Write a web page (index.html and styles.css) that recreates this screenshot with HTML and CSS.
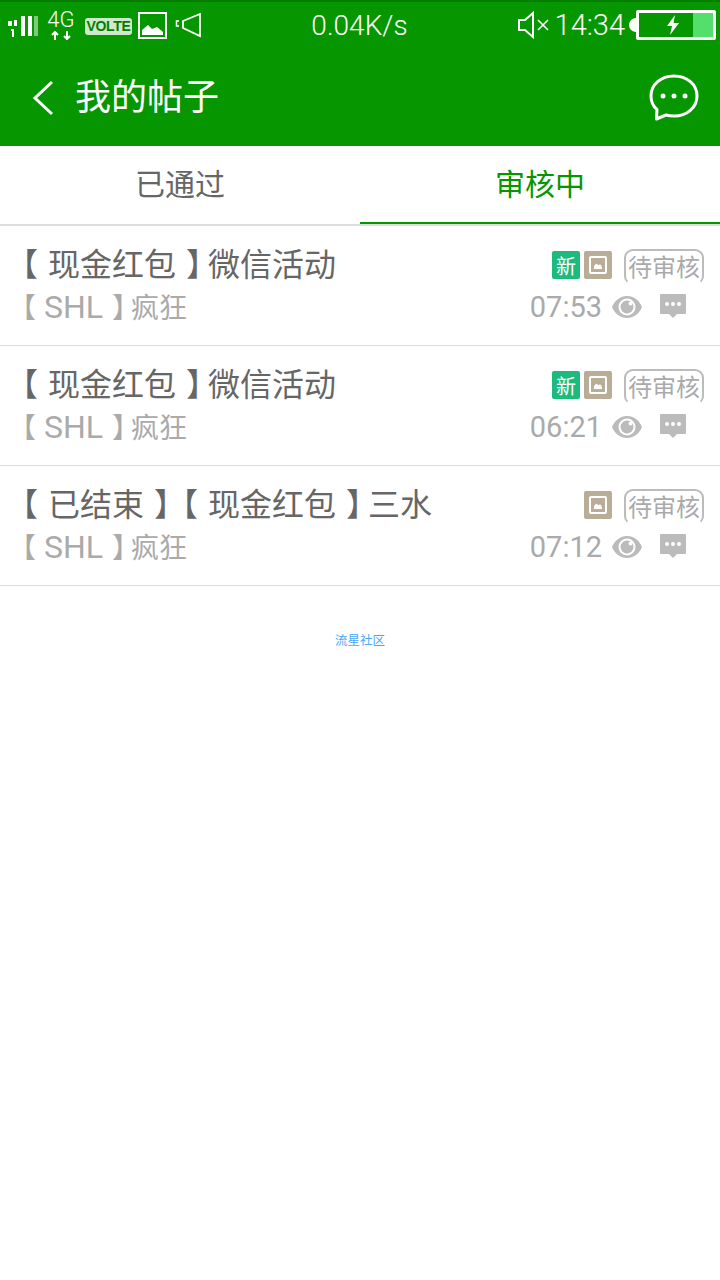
FILE: index.html
```html
<!DOCTYPE html>
<html lang="zh">
<head>
<meta charset="utf-8">
<title>我的帖子</title>
<link rel="stylesheet" href="styles.css">
</head>
<body>
<header class="top">
  <div class="status">
    <div class="status-left">
      <svg class="ic-signal" width="32" height="24" viewBox="0 0 32 24"><g fill="#fff"><rect x="0" y="7" width="4" height="5"/><rect x="6" y="6" width="3" height="6"/><rect x="13" y="2" width="4" height="20"/><rect x="20" y="2" width="4" height="20"/><path d="M3 15H6V23H4V17H3Z"/></g><rect x="26" y="2" width="4" height="20" fill="#7fc97f"/></svg>
      <div class="net"><span class="net-label">4G</span><svg width="24" height="9" viewBox="0 0 24 9"><path d="M6 9V1M3 4 6 1 9 4M18 0V8M15 5 18 8 21 5" fill="none" stroke="#fff" stroke-width="2"/></svg></div>
      <span class="volte">VOLTE</span>
      <svg class="ic-pic" width="29" height="27" viewBox="0 0 29 27"><rect x="1" y="1" width="27" height="25" fill="none" stroke="#fff" stroke-width="2"/><path d="M4 23V18L10 13 14 17 19 15 25 20V23Z" fill="#fff"/></svg>
      <svg class="ic-horn" width="27" height="25" viewBox="0 0 27 25"><path d="M8 8 25 1V23L8 15Z" fill="none" stroke="#fff" stroke-width="1.800"/><path d="M4 8H1.500V13H4" fill="none" stroke="#fff" stroke-width="1.500"/></svg>
    </div>
    <span class="speed">0.04K/s</span>
    <div class="status-right">
      <svg width="32" height="28" viewBox="0 0 32 28"><path d="M1 9H7L15 2V26L7 19H1Z" fill="none" stroke="#fff" stroke-width="2"/><path d="M20 9 30 19M30 9 20 19" stroke="#fff" stroke-width="1.600"/></svg>
      <span class="clock">14:34</span>
      <div class="battery">
        <svg class="bolt" width="14" height="20" viewBox="0 0 14 20"><path d="M9 0 1 11H6L4 20 13 8H7.500Z" fill="#fff"/></svg>
        <div class="level"></div>
      </div>
    </div>
  </div>
  <div class="titlebar">
    <svg class="back" width="22" height="36" viewBox="0 0 22 36"><path d="M20 2 3 18 20 34" fill="none" stroke="#fff" stroke-width="3"/></svg>
    <h1 class="title">我的帖子</h1>
    <svg class="bubble" width="50" height="48" viewBox="0 0 50 48"><path d="M25 2C12 2 2 10.500 2 22 2 28 5 33 8 35.500L7.500 45 17 41C19.500 41.700 22 42 25 42 38 42 48 33.500 48 22 48 10.500 38 2 25 2Z" fill="none" stroke="#fff" stroke-width="3" stroke-linejoin="round"/><circle cx="14" cy="22" r="2.500" fill="#fff"/><circle cx="25" cy="22" r="2.500" fill="#fff"/><circle cx="36" cy="22" r="2.500" fill="#fff"/></svg>
  </div>
</header>

<nav class="tabs">
  <div class="tab">已通过</div>
  <div class="tab active">审核中</div>
</nav>

<main>
  <article class="post">
    <div class="row">
      <span class="post-title"><span class="lb">【</span>现金红包<span class="rb">】</span>微信活动</span>
      <div class="badges">
        <span class="badge new">新</span>
        <span class="badge pic"><svg width="18" height="18" viewBox="0 0 18 18"><rect x="1" y="1" width="16" height="16" rx="1" fill="none" stroke="#fff" stroke-width="2"/><path d="M5 13V10L7.500 7.500 9.500 9.500 11 8 13 11V13Z" fill="#fff"/></svg></span>
        <span class="state">待审核</span>
      </div>
    </div>
    <div class="row sub">
      <span class="author"><span class="lb-s">【</span><span class="latin">SHL</span><span class="rb-s">】</span>疯狂</span>
      <div class="meta">
        <span class="time">07:53</span>
        <svg class="eye" width="30" height="22" viewBox="0 0 30 22"><path fill-rule="evenodd" fill="#bbb" d="M15 0C23 0 28 6 30 11 28 16 23 22 15 22 7 22 2 16 0 11 2 6 7 0 15 0ZM15 2.500A8.500 8.500 0 1 0 15 19.500 8.500 8.500 0 1 0 15 2.500Z"/><circle cx="15" cy="11" r="6.500" fill="#bbb"/><circle cx="18.500" cy="7.500" r="2" fill="#fff"/></svg>
        <svg class="cmt" width="26" height="24" viewBox="0 0 26 24"><path fill="#bbb" d="M1 0H25A1 1 0 0 1 26 1V19A1 1 0 0 1 25 20H17L13 24 9 20H1A1 1 0 0 1 0 19V1A1 1 0 0 1 1 0Z"/><circle cx="7" cy="10" r="2" fill="#fff"/><circle cx="13" cy="10" r="2" fill="#fff"/><circle cx="19" cy="10" r="2" fill="#fff"/></svg>
      </div>
    </div>
  </article>

  <article class="post">
    <div class="row">
      <span class="post-title"><span class="lb">【</span>现金红包<span class="rb">】</span>微信活动</span>
      <div class="badges">
        <span class="badge new">新</span>
        <span class="badge pic"><svg width="18" height="18" viewBox="0 0 18 18"><rect x="1" y="1" width="16" height="16" rx="1" fill="none" stroke="#fff" stroke-width="2"/><path d="M5 13V10L7.500 7.500 9.500 9.500 11 8 13 11V13Z" fill="#fff"/></svg></span>
        <span class="state">待审核</span>
      </div>
    </div>
    <div class="row sub">
      <span class="author"><span class="lb-s">【</span><span class="latin">SHL</span><span class="rb-s">】</span>疯狂</span>
      <div class="meta">
        <span class="time">06:21</span>
        <svg class="eye" width="30" height="22" viewBox="0 0 30 22"><path fill-rule="evenodd" fill="#bbb" d="M15 0C23 0 28 6 30 11 28 16 23 22 15 22 7 22 2 16 0 11 2 6 7 0 15 0ZM15 2.500A8.500 8.500 0 1 0 15 19.500 8.500 8.500 0 1 0 15 2.500Z"/><circle cx="15" cy="11" r="6.500" fill="#bbb"/><circle cx="18.500" cy="7.500" r="2" fill="#fff"/></svg>
        <svg class="cmt" width="26" height="24" viewBox="0 0 26 24"><path fill="#bbb" d="M1 0H25A1 1 0 0 1 26 1V19A1 1 0 0 1 25 20H17L13 24 9 20H1A1 1 0 0 1 0 19V1A1 1 0 0 1 1 0Z"/><circle cx="7" cy="10" r="2" fill="#fff"/><circle cx="13" cy="10" r="2" fill="#fff"/><circle cx="19" cy="10" r="2" fill="#fff"/></svg>
      </div>
    </div>
  </article>

  <article class="post">
    <div class="row">
      <span class="post-title"><span class="lb">【</span>已结束<span class="rb">】</span><span class="lb">【</span>现金红包<span class="rb">】</span>三水</span>
      <div class="badges">
        <span class="badge pic"><svg width="18" height="18" viewBox="0 0 18 18"><rect x="1" y="1" width="16" height="16" rx="1" fill="none" stroke="#fff" stroke-width="2"/><path d="M5 13V10L7.500 7.500 9.500 9.500 11 8 13 11V13Z" fill="#fff"/></svg></span>
        <span class="state">待审核</span>
      </div>
    </div>
    <div class="row sub">
      <span class="author"><span class="lb-s">【</span><span class="latin">SHL</span><span class="rb-s">】</span>疯狂</span>
      <div class="meta">
        <span class="time">07:12</span>
        <svg class="eye" width="30" height="22" viewBox="0 0 30 22"><path fill-rule="evenodd" fill="#bbb" d="M15 0C23 0 28 6 30 11 28 16 23 22 15 22 7 22 2 16 0 11 2 6 7 0 15 0ZM15 2.500A8.500 8.500 0 1 0 15 19.500 8.500 8.500 0 1 0 15 2.500Z"/><circle cx="15" cy="11" r="6.500" fill="#bbb"/><circle cx="18.500" cy="7.500" r="2" fill="#fff"/></svg>
        <svg class="cmt" width="26" height="24" viewBox="0 0 26 24"><path fill="#bbb" d="M1 0H25A1 1 0 0 1 26 1V19A1 1 0 0 1 25 20H17L13 24 9 20H1A1 1 0 0 1 0 19V1A1 1 0 0 1 1 0Z"/><circle cx="7" cy="10" r="2" fill="#fff"/><circle cx="13" cy="10" r="2" fill="#fff"/><circle cx="19" cy="10" r="2" fill="#fff"/></svg>
      </div>
    </div>
  </article>
</main>

<footer class="foot">流星社区</footer>
</body>
</html>
```
FILE: styles.css
```css
* { box-sizing: border-box; }
html, body { margin: 0; padding: 0; }
body {
  width: 720px;
  height: 1280px;
  overflow: hidden;
  background: #fff;
  font-family: "Liberation Sans", "Noto Sans CJK SC", sans-serif;
  text-spacing-trim: space-all;
}
.top {
  height: 146px;
  background: #069600;
  border-top: 2px solid #057c00;
  color: #fff;
}
.status {
  height: 46px;
  display: grid;
  grid-template-columns: 1fr auto 1fr;
  align-items: center;
}
.status-left {
  display: flex;
  align-items: center;
  padding-left: 8px;
}
.ic-signal { margin-top: 2px; }
.net {
  display: flex;
  flex-direction: column;
  align-items: center;
  width: 28px;
  margin-left: 7px;
}
.net-label {
  font-size: 22px;
  line-height: 20px;
  font-family: "Roboto", sans-serif;
  font-weight: 300;
  margin-bottom: 1px;
}
.volte {
  background: #cdeacb;
  color: #057c00;
  border-radius: 3px;
  font-size: 14px;
  font-weight: 700;
  line-height: 17px;
  width: 47px;
  text-align: center;
  margin-left: 10px;
  margin-top: 2px;
  white-space: nowrap;
  letter-spacing: -0.3px;
}
.ic-pic { margin-left: 6px; }
.ic-horn { margin-left: 8px; }
.speed {
  font-size: 28px;
  font-family: "Roboto", sans-serif;
  font-weight: 300;
  margin-left: -1px;
}
.status-right {
  display: flex;
  justify-content: flex-end;
  align-items: center;
  padding-right: 4px;
}
.clock {
  font-size: 29px;
  font-family: "Roboto", sans-serif;
  font-weight: 300;
  margin: 0 11px 0 5px;
}
.battery {
  position: relative;
  width: 80px;
  height: 30px;
  border: 3px solid #fff;
  border-radius: 2px;
  display: flex;
  justify-content: flex-end;
  align-items: stretch;
}
.battery::before {
  content: "";
  position: absolute;
  left: -10px;
  top: 5px;
  width: 10px;
  height: 14px;
  background: #fff;
  border-radius: 7px 0 0 7px;
}
.bolt {
  position: absolute;
  left: 27px;
  top: 2px;
}
.level {
  width: 20px;
  background: #54de6c;
}
.titlebar {
  height: 98px;
  display: flex;
  align-items: center;
  padding: 2px 21px 0 32px;
}
.title {
  flex: 1;
  margin: 0 0 0 21px;
  font-size: 36px;
  font-weight: 400;
  line-height: 1;
}
.tabs {
  display: flex;
  height: 80px;
  border-bottom: 2px solid #ddd;
}
.tab {
  flex: 1;
  text-align: center;
  font-size: 30px;
  line-height: 78px;
  color: #666;
}
.tab.active {
  color: #069600;
  border-bottom: 2px solid #069600;
  height: 78px;
}
.post {
  height: 120px;
  padding: 20px 16px 0 16px;
  border-bottom: 1px solid #d9d9d9;
}
.row {
  display: flex;
  justify-content: space-between;
  align-items: center;
  height: 38px;
}
.sub { height: 40px; margin-top: 3px; }
.post-title {
  font-size: 32px;
  line-height: 38px;
  color: #666;
  white-space: nowrap;
}
.lb { font-feature-settings: "halt"; margin-left: 6px; margin-right: 10px; }
.rb { font-feature-settings: "halt"; margin-left: 10px; margin-right: 6px; }
.lb-s { font-feature-settings: "halt"; margin-left: 6px; margin-right: 8px; }
.rb-s { font-feature-settings: "halt"; margin-left: 9px; margin-right: 5px; }
.badges {
  display: flex;
  align-items: center;
  gap: 4px;
}
.badge {
  width: 28px;
  height: 28px;
  border-radius: 2px;
  display: flex;
  align-items: center;
  justify-content: center;
  color: #fff;
  font-size: 20px;
}
.new { background: #1cba7c; }
.pic { background: #b9ad97; }
.state {
  margin-left: 8px;
  margin-top: 4px;
  width: 80px;
  height: 36px;
  border: 2px solid #bbb;
  border-bottom-color: transparent;
  border-radius: 9px;
  color: #aaa;
  font-size: 24px;
  line-height: 34px;
  text-align: center;
  white-space: nowrap;
}
.author {
  font-size: 28px;
  line-height: 36px;
  color: #aaa;
  white-space: nowrap;
  padding-top: 2px;
}
.latin {
  font-family: "Roboto", sans-serif;
  font-size: 32px;
}
.meta {
  display: flex;
  align-items: center;
  padding-right: 18px;
}
.time {
  font-family: "Roboto", sans-serif;
  font-size: 29px;
  color: #aaa;
}
.eye { margin-left: 10px; }
.cmt { margin-left: 18px; margin-bottom: 2px; }
.foot {
  margin-top: 44px;
  text-align: center;
  font-size: 12.5px;
  color: #4aa8f5;
}
```
